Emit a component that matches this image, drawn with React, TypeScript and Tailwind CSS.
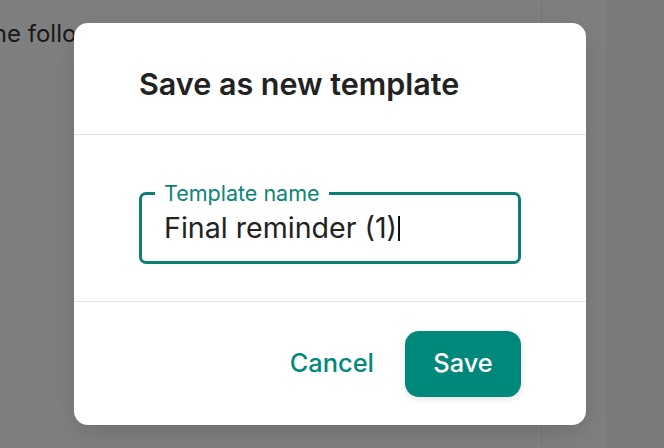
import React from "react";

// Save-as-template dialog shown on top of a dimmed editor page
export default function App() {
  return (
    <div className="relative h-[448px] w-[664px] overflow-hidden bg-white font-['Inter',sans-serif]">
      {/* Page behind the overlay */}
      <div className="flex h-full">
        <div className="flex-1 border-r border-[#eeeeee] pt-[20px]">
          <p className="-ml-[15px] whitespace-nowrap text-[24px] leading-[28px] text-[#333333]">
            the follow-up
          </p>
        </div>
        <div className="w-[64px]" />
        <div className="w-[58px] bg-[#f4f4f4]" />
      </div>

      {/* Overlay */}
      <div className="absolute inset-0 flex items-center bg-black/50 pl-[74px]">
        <div className="flex h-[402px] w-[512px] flex-col rounded-[14px] bg-white shadow-[0_8px_24px_rgba(0,0,0,0.12)]">
          <div className="border-b border-[#e3e3e3] px-[65px] pb-[32px] pt-[43px]">
            <h2 className="text-[30.5px] font-semibold leading-[36px] text-[#222222]">
              Save as new template
            </h2>
          </div>

          <div className="border-b border-[#e3e3e3] px-[65px] pb-[37px] pt-[57px]">
            <div className="relative flex h-[72px] items-center rounded-[7px] border-[3px] border-[#0c7f72] pl-[22px] pr-[23px]">
              <span className="absolute left-[13px] top-[-12px] bg-white px-[9px] text-[21.5px] leading-[20px] text-[#0b8578]">
                Template name
              </span>
              <span className="text-[28.6px] leading-[32px] text-[#222222]">
                Final reminder (1)
              </span>
              <span className="ml-[1px] h-[25px] w-[2px] bg-[#111111]" />
            </div>
          </div>

          <div className="flex flex-1 items-center justify-end gap-[15px] px-[65px]">
            <button className="px-[16px] text-[25.4px] font-medium text-[#00897b]">
              Cancel
            </button>
            <button className="flex h-[66px] w-[116px] items-center justify-center rounded-[14px] bg-[#00897b] text-[25.4px] font-medium text-white shadow-[0_2px_6px_rgba(0,0,0,0.12)]">
              Save
            </button>
          </div>
        </div>
      </div>
    </div>
  );
}
